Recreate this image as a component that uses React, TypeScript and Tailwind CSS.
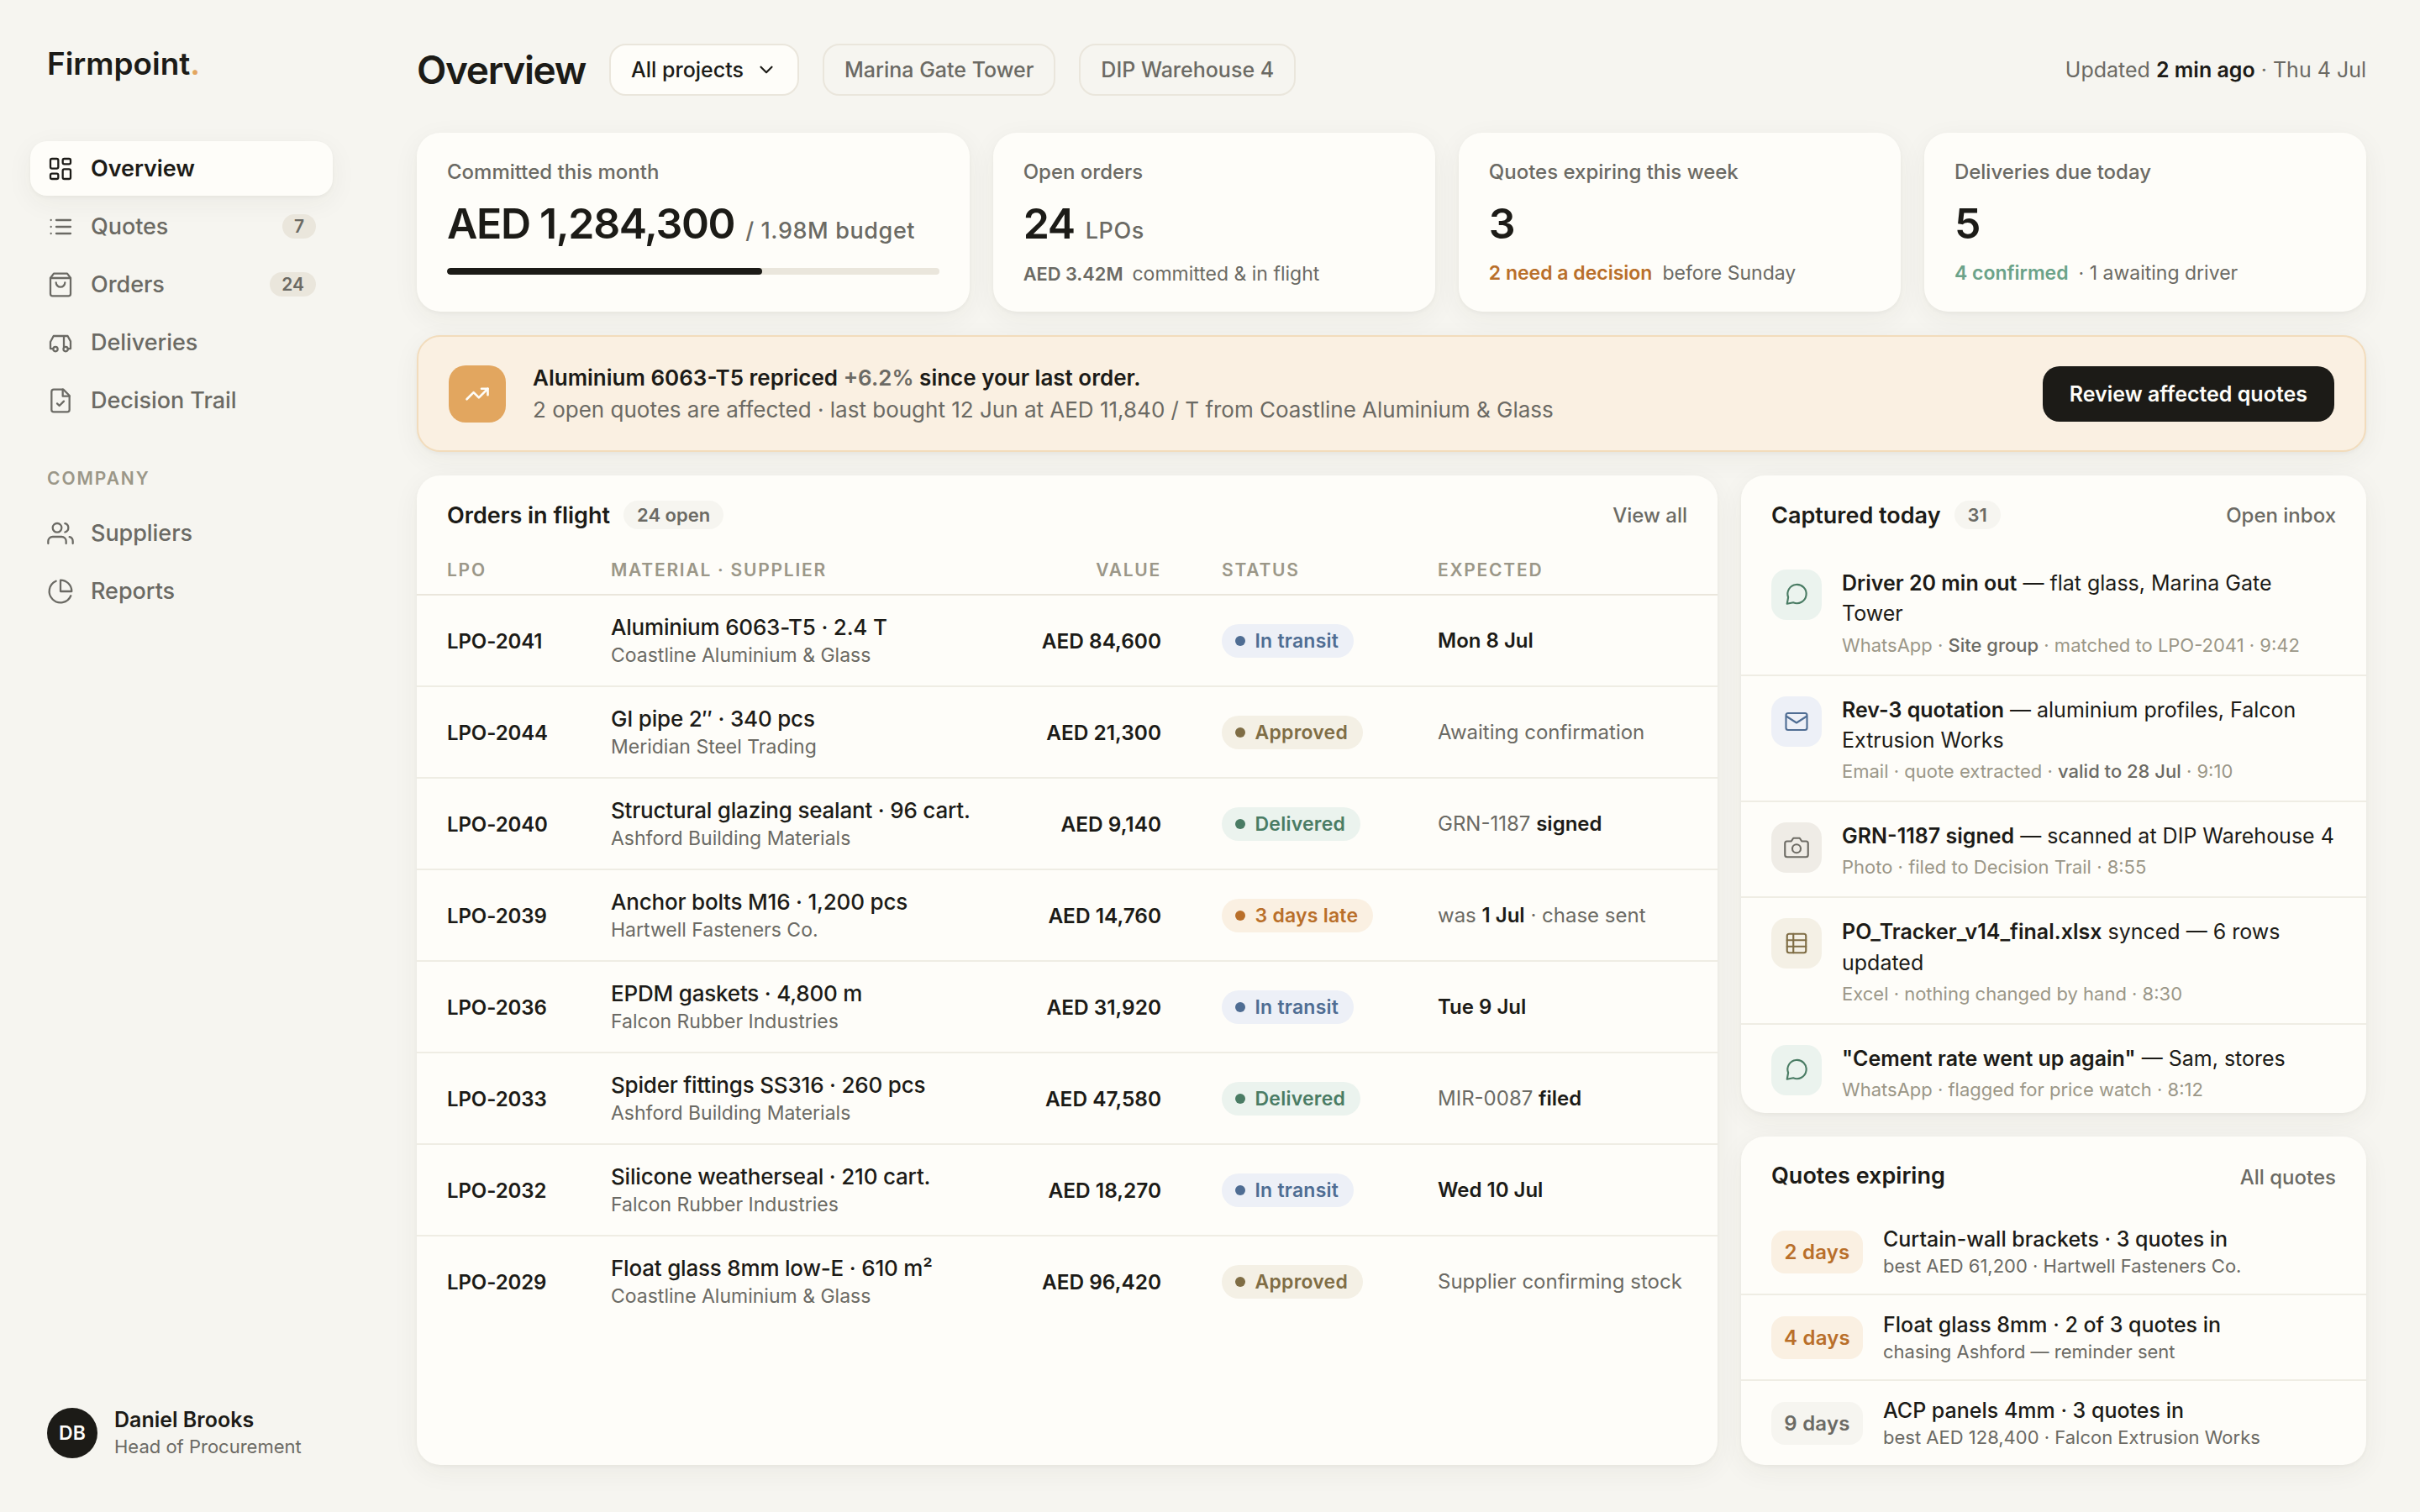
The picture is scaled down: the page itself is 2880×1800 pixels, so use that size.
import type { ReactNode } from 'react';
import clsx from 'clsx';
import { ChevronDown, TrendingUp } from 'lucide-react';

const cardShadow = 'shadow-[0_2px_4px_rgba(60,52,30,0.04),0_8px_32px_rgba(60,52,30,0.055)]';

function Icon({ children, className }: { children: ReactNode; className: string }) {
  return (
    <svg
      viewBox="0 0 24 24"
      fill="none"
      stroke="currentColor"
      strokeWidth={1.7}
      strokeLinecap="round"
      strokeLinejoin="round"
      className={clsx('shrink-0 overflow-visible', className)}
    >
      {children}
    </svg>
  );
}

const icons = {
  overview: (
    <>
      <rect x="3" y="3" width="7" height="8.7" rx="1.4" />
      <rect x="14" y="3" width="7" height="4.7" rx="1.4" />
      <rect x="14" y="12.3" width="7" height="8.7" rx="1.4" />
      <rect x="3" y="16.3" width="7" height="4.7" rx="1.4" />
    </>
  ),
  quotes: <path d="M8.2 6H21M8.2 12H21M8.2 18H21M3.5 6h.01M3.5 12h.01M3.5 18h.01" />,
  orders: (
    <>
      <path d="M6 2 3 6v14a2 2 0 0 0 2 2h14a2 2 0 0 0 2-2V6l-3-4Z" />
      <path d="M3 6h18M16 10a4 4 0 0 1-8 0" />
    </>
  ),
  deliveries: (
    <>
      <path d="M5.4 17.3H3v-6L5.8 6h12.6L21 10.8v6.5h-2.4M15 6v10" />
      <circle cx="7.5" cy="17.7" r="2" />
      <circle cx="16.6" cy="17.7" r="2" />
    </>
  ),
  trail: (
    <>
      <path d="M14.5 2H6a2 2 0 0 0-2 2v16a2 2 0 0 0 2 2h12a2 2 0 0 0 2-2V7.5Z" />
      <path d="M14 2v6h6M9 14.5l2 2 4-4" />
    </>
  ),
  suppliers: (
    <>
      <path d="M17 21v-2a4 4 0 0 0-4-4H5a4 4 0 0 0-4 4v2" />
      <circle cx="9" cy="7" r="4" />
      <path d="M23 21v-2a4 4 0 0 0-3-3.87M16 3.13a4 4 0 0 1 0 7.75" />
    </>
  ),
  reports: (
    <>
      <path d="M21.21 15.89A10 10 0 1 1 8 2.83" />
      <path d="M22 12A10 10 0 0 0 12 2v10z" />
    </>
  ),
  chat: <path d="M4.1 14.4A8.9 8.9 0 1 1 8.9 19.4L3 20.6Z" />,
  mail: (
    <>
      <rect x="2" y="4" width="20" height="16" rx="2" />
      <path d="m2.4 7 9.6 6.2L21.6 7" />
    </>
  ),
  camera: (
    <>
      <path d="M23 19a2 2 0 0 1-2 2H3a2 2 0 0 1-2-2V8a2 2 0 0 1 2-2h4l2-3h6l2 3h4a2 2 0 0 1 2 2z" />
      <circle cx="12" cy="13" r="4" />
    </>
  ),
  sheet: (
    <>
      <rect x="3" y="3" width="18" height="18" rx="2" />
      <path d="M3 9h18M3 15h18M9 3v18" />
    </>
  ),
};

type IconName = keyof typeof icons;

const mainNav: { label: string; icon: IconName; badge?: string }[] = [
  { label: 'Overview', icon: 'overview' },
  { label: 'Quotes', icon: 'quotes', badge: '7' },
  { label: 'Orders', icon: 'orders', badge: '24' },
  { label: 'Deliveries', icon: 'deliveries' },
  { label: 'Decision Trail', icon: 'trail' },
];

const companyNav: { label: string; icon: IconName; badge?: string }[] = [
  { label: 'Suppliers', icon: 'suppliers' },
  { label: 'Reports', icon: 'reports' },
];

type Status = 'In transit' | 'Approved' | 'Delivered' | '3 days late';

const statusStyles: Record<Status, string> = {
  'In transit': 'bg-[#edf0f7] text-[#4f6d93]',
  Approved: 'bg-[#f4f0e5] text-[#7f6d45]',
  Delivered: 'bg-[#ebf3ee] text-[#4a7c64]',
  '3 days late': 'bg-[#faf0e2] text-[#b96f2a]',
};

const orders: { id: string; name: string; supplier: string; value: string; status: Status; expected: ReactNode }[] = [
  { id: 'LPO-2041', name: 'Aluminium 6063-T5 · 2.4 T', supplier: 'Coastline Aluminium & Glass', value: 'AED 84,600', status: 'In transit', expected: <B>Mon 8 Jul</B> },
  { id: 'LPO-2044', name: 'GI pipe 2″ · 340 pcs', supplier: 'Meridian Steel Trading', value: 'AED 21,300', status: 'Approved', expected: 'Awaiting confirmation' },
  { id: 'LPO-2040', name: 'Structural glazing sealant · 96 cart.', supplier: 'Ashford Building Materials', value: 'AED 9,140', status: 'Delivered', expected: <>GRN-1187 <B>signed</B></> },
  { id: 'LPO-2039', name: 'Anchor bolts M16 · 1,200 pcs', supplier: 'Hartwell Fasteners Co.', value: 'AED 14,760', status: '3 days late', expected: <>was <B>1 Jul</B> · chase sent</> },
  { id: 'LPO-2036', name: 'EPDM gaskets · 4,800 m', supplier: 'Falcon Rubber Industries', value: 'AED 31,920', status: 'In transit', expected: <B>Tue 9 Jul</B> },
  { id: 'LPO-2033', name: 'Spider fittings SS316 · 260 pcs', supplier: 'Ashford Building Materials', value: 'AED 47,580', status: 'Delivered', expected: <>MIR-0087 <B>filed</B></> },
  { id: 'LPO-2032', name: 'Silicone weatherseal · 210 cart.', supplier: 'Falcon Rubber Industries', value: 'AED 18,270', status: 'In transit', expected: <B>Wed 10 Jul</B> },
  { id: 'LPO-2029', name: 'Float glass 8mm low-E · 610 m²', supplier: 'Coastline Aluminium & Glass', value: 'AED 96,420', status: 'Approved', expected: 'Supplier confirming stock' },
];

const captured: { icon: IconName; tone: string; title: ReactNode; meta: ReactNode }[] = [
  {
    icon: 'chat',
    tone: 'bg-[#ebf3ee] text-[#4a7c64]',
    title: <><B>Driver 20 min out</B> — flat glass, Marina Gate Tower</>,
    meta: <>WhatsApp · <M>Site group</M> · matched to LPO-2041 · 9:42</>,
  },
  {
    icon: 'mail',
    tone: 'bg-[#edf0f7] text-[#4f6d93]',
    title: <><B>Rev-3 quotation</B> — aluminium profiles, Falcon Extrusion Works</>,
    meta: <>Email · quote extracted · <M>valid to 28 Jul</M> · 9:10</>,
  },
  {
    icon: 'camera',
    tone: 'bg-[#efece6] text-[#6d6b64]',
    title: <><B>GRN-1187 signed</B> — scanned at DIP Warehouse 4</>,
    meta: 'Photo · filed to Decision Trail · 8:55',
  },
  {
    icon: 'sheet',
    tone: 'bg-[#f4f0e5] text-[#7f6d45]',
    title: <><B>PO_Tracker_v14_final.xlsx</B> synced — 6 rows updated</>,
    meta: 'Excel · nothing changed by hand · 8:30',
  },
  {
    icon: 'chat',
    tone: 'bg-[#ebf3ee] text-[#4a7c64]',
    title: <><B>"Cement rate went up again"</B> — Sam, stores</>,
    meta: 'WhatsApp · flagged for price watch · 8:12',
  },
];

const expiring = [
  { days: '2 days', urgent: true, name: 'Curtain-wall brackets · 3 quotes in', note: 'best AED 61,200 · Hartwell Fasteners Co.' },
  { days: '4 days', urgent: true, name: 'Float glass 8mm · 2 of 3 quotes in', note: 'chasing Ashford — reminder sent' },
  { days: '9 days', urgent: false, name: 'ACP panels 4mm · 3 quotes in', note: 'best AED 128,400 · Falcon Extrusion Works' },
];

function B({ children }: { children: ReactNode }) {
  return <b className="font-semibold text-[#1c1b17]">{children}</b>;
}

function M({ children }: { children: ReactNode }) {
  return <span className="font-medium text-[#6b6a64]">{children}</span>;
}

function NavItem({ label, icon, badge, active }: { label: string; icon: IconName; badge?: string; active?: boolean }) {
  return (
    <a
      className={clsx(
        'flex h-[65px] items-center gap-5 rounded-[20px] px-5 text-[27px]',
        active ? ['bg-[#fefdf9] font-semibold text-[#1c1b17]', cardShadow] : 'font-medium text-[#6b6a64]',
      )}
    >
      <Icon className="size-8">{icons[icon]}</Icon>
      <span className="pt-0.5 tracking-[-0.05px]">{label}</span>
      {badge && (
        <span className="ml-auto flex h-[29px] items-center rounded-full bg-[#eae6dc] px-[14px] text-[21px] font-semibold">
          {badge}
        </span>
      )}
    </a>
  );
}

function Sidebar() {
  return (
    <aside className="flex w-[432px] shrink-0 flex-col px-9 pt-[54px] pb-16">
      <div className="px-5 text-[36.9px] leading-[44px] font-semibold">
        Firmpoint<span className="text-[#e3a65f]">.</span>
      </div>
      <nav className="mt-[70px] flex flex-col gap-1">
        {mainNav.map((item) => (
          <NavItem key={item.label} {...item} active={item.label === 'Overview'} />
        ))}
      </nav>
      <div className="mt-[48px] mb-[19px] px-5 text-[21px] leading-[26px] font-semibold tracking-[1.95px] text-[#9b9788]">
        COMPANY
      </div>
      <nav className="flex flex-col gap-1">
        {companyNav.map((item) => (
          <NavItem key={item.label} {...item} />
        ))}
      </nav>
      <div className="mt-auto flex items-center gap-5 px-5">
        <div className="flex size-[60px] items-center justify-center rounded-full bg-[#1c1b17] text-[23px] font-semibold text-[#fefdf9]">
          DB
        </div>
        <div className="-my-1 pb-0.5">
          <div className="text-[25px] leading-[34px] font-semibold">Daniel Brooks</div>
          <div className="text-[22px] leading-[30px] text-[#6b6a64]">Head of Procurement</div>
        </div>
      </div>
    </aside>
  );
}

function Header() {
  return (
    <header className="flex h-[62px] shrink-0 items-center gap-7 text-[25px]">
      <h1 className="text-[46px] leading-[62px] font-semibold tracking-[-1.35px]">Overview</h1>
      <button className="flex h-full items-center gap-[14px] rounded-[20px] border-2 border-[#eae6dc] bg-[#fefdf9] px-6 font-medium">
        <span className="pt-0.5">All projects</span>
        <ChevronDown className="size-[26px]" />
      </button>
      <button className="h-full rounded-[20px] border-2 border-[#eae6dc] px-6 pt-0.5 font-medium text-[#6b6a64]">
        Marina Gate Tower
      </button>
      <button className="h-full rounded-[20px] border-2 border-[#eae6dc] px-6 pt-0.5 font-medium text-[#6b6a64]">
        DIP Warehouse 4
      </button>
      <p className="ml-auto pt-0.5 text-[#6b6a64]">
        Updated <B>2 min ago</B> · Thu 4 Jul
      </p>
    </header>
  );
}

function StatCard({ label, value, unit, children }: { label: string; value: string; unit?: string; children: ReactNode }) {
  return (
    <div className={clsx('rounded-[28px] bg-[#fefdf9] px-9 pt-[31px]', cardShadow)}>
      <div className="text-[24px] leading-8 font-medium text-[#6b6a64]">{label}</div>
      <div className="mt-[15px] flex h-[60px] items-baseline gap-[13px] whitespace-nowrap">
        <span className="text-[50px] leading-[60px] font-semibold tracking-[-1.35px]">{value}</span>
        {unit && <span className="text-[27px] leading-none font-medium tracking-[0.6px] text-[#6b6a64]">{unit}</span>}
      </div>
      {children}
    </div>
  );
}

function Stats() {
  return (
    <section className="grid h-[213px] shrink-0 grid-cols-[1.25fr_1fr_1fr_1fr] gap-7">
      <StatCard label="Committed this month" value="AED 1,284,300" unit="/ 1.98M budget">
        <div className="mt-[23px] h-2 overflow-hidden rounded-full bg-[#eae6dc]">
          <div className="h-full w-[64%] rounded-full bg-[#1c1b17]" />
        </div>
      </StatCard>
      <StatCard label="Open orders" value="24" unit="LPOs">
        <div className="mt-4 flex gap-[11px] text-[23px] leading-7 text-[#6b6a64]">
          <b className="text-[21.8px] font-semibold">AED 3.42M</b>
          <span>committed &amp; in flight</span>
        </div>
      </StatCard>
      <StatCard label="Quotes expiring this week" value="3">
        <div className="mt-[15px] flex gap-3 text-[23px] leading-7 text-[#6b6a64]">
          <b className="font-semibold text-[#b96f2a]">2 need a decision</b>
          <span>before Sunday</span>
        </div>
      </StatCard>
      <StatCard label="Deliveries due today" value="5">
        <div className="mt-[15px] flex gap-3 text-[23px] leading-7 text-[#6b6a64]">
          <b className="font-semibold text-[#6ba389]">4 confirmed</b>
          <span>· 1 awaiting driver</span>
        </div>
      </StatCard>
    </section>
  );
}

function PriceAlert() {
  return (
    <section
      className={clsx(
        'flex h-[139px] shrink-0 items-center rounded-[28px] border-2 border-[#f2dcbc] bg-[#faf0e2] px-9',
        cardShadow,
      )}
    >
      <div className="flex size-[68px] items-center justify-center rounded-[20px] bg-[#e2a65f] text-[#fefdf9]">
        <TrendingUp className="size-[30px]" strokeWidth={2.1} />
      </div>
      <div className="ml-8 text-[26px] leading-[38px]">
        <p className="font-semibold">
          Aluminium 6063-T5 repriced <span className="text-[#6b6a64]">+6.2%</span> since your last order.
        </p>
        <p className="text-[#6b6a64]">
          2 open quotes are affected · last bought 12 Jun at AED 11,840 / T from Coastline Aluminium &amp; Glass
        </p>
      </div>
      <button className="ml-auto h-[66px] rounded-[20px] bg-[#1c1b17] px-8 pt-0.5 text-[25px] font-semibold text-[#fefdf9]">
        Review affected quotes
      </button>
    </section>
  );
}

function PanelHead({ title, count, action }: { title: string; count?: string; action: string }) {
  return (
    <div className="flex h-[38px] items-center px-9">
      <h2 className={clsx('text-[27px] font-semibold', count && 'pt-0.5')}>{title}</h2>
      {count && (
        <span className="ml-4 flex h-[34px] items-center rounded-full bg-[#f6f5f0] px-4 text-[22px] font-semibold text-[#6b6a64]">
          {count}
        </span>
      )}
      <a className={clsx('ml-auto text-[24px] font-medium text-[#6b6a64]', count ? 'pt-0.5' : 'pt-1')}>{action}</a>
    </div>
  );
}

function OrdersPanel() {
  return (
    <section className={clsx('min-w-0 flex-1 overflow-hidden rounded-[28px] bg-[#fefdf9] pt-7', cardShadow)}>
      <PanelHead title="Orders in flight" count="24 open" action="View all" />
      <div className="grid grid-cols-[195px_455px_272px_257px_1fr] border-b-2 border-[#eae6dc] px-9 pt-8 pb-[14px] text-[21px] leading-[29px] font-semibold tracking-[1.75px] text-[#9b9788]">
        <span>LPO</span>
        <span>MATERIAL · SUPPLIER</span>
        <span className="pr-[72px] text-right">VALUE</span>
        <span>STATUS</span>
        <span>EXPECTED</span>
      </div>
      {orders.map((o) => (
        <div
          key={o.id}
          className="grid h-[109px] grid-cols-[195px_455px_272px_257px_1fr] items-center border-b-2 border-[#efede4] px-9 text-[24px] last:border-transparent"
        >
          <span className="pt-0.5 font-semibold tracking-[-0.1px]">{o.id}</span>
          <div>
            <div className="text-[26px] leading-[34px] font-medium tracking-[-0.2px]">{o.name}</div>
            <div className="text-[23px] leading-8 text-[#6b6a64]">{o.supplier}</div>
          </div>
          <span className="pt-0.5 pr-[72px] text-right text-[24.4px] font-semibold">{o.value}</span>
          <div>
            <span
              className={clsx(
                'inline-flex h-10 items-center gap-[11.5px] rounded-full pr-[18px] pl-4 align-middle text-[23px] font-semibold tracking-[0.01em]',
                statusStyles[o.status],
              )}
            >
              <i className="size-3 rounded-full bg-current" />
              <span className="pt-px">{o.status}</span>
            </span>
          </div>
          <span className="whitespace-nowrap text-[#6b6a64]">{o.expected}</span>
        </div>
      ))}
    </section>
  );
}

function CapturedPanel() {
  return (
    <section className={clsx('min-h-0 flex-1 overflow-hidden rounded-[28px] bg-[#fefdf9] pt-7', cardShadow)}>
      <div className="pb-[22px]">
        <PanelHead title="Captured today" count="31" action="Open inbox" />
      </div>
      {captured.map((c, i) => (
        <div key={i} className="flex gap-6 border-b-2 border-[#efede4] px-9 py-[22px] last:border-b-0">
          <div className={clsx('mt-0.5 flex size-[60px] shrink-0 items-center justify-center rounded-[18px]', c.tone)}>
            <Icon className="size-[30px]">{icons[c.icon]}</Icon>
          </div>
          <div>
            <p className="text-[25px] leading-[36.25px]">{c.title}</p>
            <p className="mt-[6px] -mb-px text-[22px] leading-[27px] text-[#9b9788]">{c.meta}</p>
          </div>
        </div>
      ))}
    </section>
  );
}

function ExpiringPanel() {
  return (
    <section className={clsx('shrink-0 overflow-hidden rounded-[28px] bg-[#fefdf9] pt-7', cardShadow)}>
      <div className="pb-[21px]">
        <PanelHead title="Quotes expiring" action="All quotes" />
      </div>
      {expiring.map((q) => (
        <div key={q.days} className="flex h-[102px] items-center gap-6 border-b-2 border-[#efede4] px-9 last:h-[100px] last:border-b-0">
          <span
            className={clsx(
              'flex h-[51px] w-[109px] shrink-0 items-center justify-center rounded-2xl pt-0.5 text-[24px] font-semibold tracking-[0.2px]',
              q.urgent ? 'bg-[#faf0e2] text-[#b96f2a]' : 'bg-[#f6f5f0] text-[#6b6a64]',
            )}
          >
            {q.days}
          </span>
          <div>
            <div className="text-[25px] leading-[34px] font-medium">{q.name}</div>
            <div className="text-[22px] leading-[30px] text-[#6b6a64]">{q.note}</div>
          </div>
        </div>
      ))}
    </section>
  );
}

export default function App() {
  return (
    <div className="flex h-[1800px] w-[2880px] overflow-hidden bg-[#f6f5f0] font-['Inter',sans-serif] text-[#1c1b17] antialiased">
      <Sidebar />
      <main className="flex min-w-0 flex-1 flex-col px-16 pt-[52px] pb-14">
        <Header />
        <div className="mt-11 flex min-h-0 flex-1 flex-col gap-7">
          <Stats />
          <PriceAlert />
          <div className="flex min-h-0 flex-1 gap-7">
            <OrdersPanel />
            <div className="flex w-[744px] shrink-0 flex-col gap-7">
              <CapturedPanel />
              <ExpiringPanel />
            </div>
          </div>
        </div>
      </main>
    </div>
  );
}
